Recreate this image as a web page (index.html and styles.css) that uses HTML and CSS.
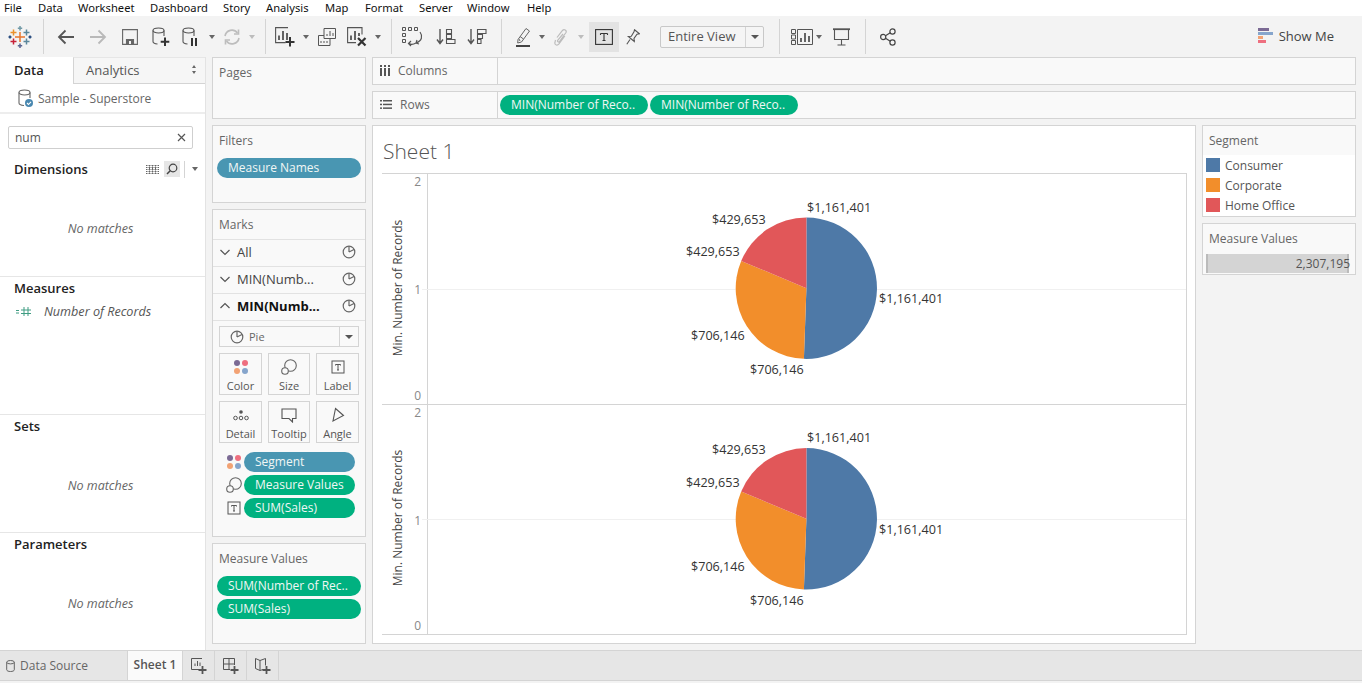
FILE: index.html
```html
<!DOCTYPE html>
<html lang="en">
<head>
<meta charset="utf-8">
<title>Tableau - Sheet 1</title>
<link rel="stylesheet" href="styles.css">
</head>
<body>
<svg class="defs" aria-hidden="true">
  <symbol id="pie" viewBox="0 0 14 14"><circle cx="7" cy="7" r="5.800" fill="none" stroke="#666" stroke-width="1.200"/><path d="M7 7V1.200M7 7l5-2.500" fill="none" stroke="#666" stroke-width="1.200"/></symbol>
  <symbol id="chev-d" viewBox="0 0 12 12"><path d="M1.500 4l4.500 4.500L10.500 4" fill="none" stroke="#555" stroke-width="1.200"/></symbol>
  <symbol id="chev-u" viewBox="0 0 12 12"><path d="M1.500 8L6 3.500 10.500 8" fill="none" stroke="#555" stroke-width="1.200"/></symbol>
  <symbol id="dots" viewBox="0 0 16 16"><circle cx="4" cy="4" r="3" fill="#7b6a94"/><circle cx="12" cy="4" r="3" fill="#ee6f7f"/><circle cx="4" cy="12" r="3" fill="#f2a274"/><circle cx="12" cy="12" r="3" fill="#86a5cc"/></symbol>
  <symbol id="size" viewBox="0 0 16 16"><circle cx="9.500" cy="6.500" r="5.800" fill="none" stroke="#666" stroke-width="1.100"/><circle cx="4" cy="12" r="3.300" fill="#fafafa" stroke="#666" stroke-width="1.100"/></symbol>
  <symbol id="tbox" viewBox="0 0 14 14"><rect x="1" y="1" width="12" height="12" fill="none" stroke="#555"/><path d="M4.500 4.500h5M7 4.500v5.500M6 10h2M4.500 4.500v1M9.500 4.500v1" fill="none" stroke="#555"/></symbol>
</svg>

<div class="app">
  <nav class="menu">
    <span class="m m-file">File</span><span class="m m-data">Data</span><span class="m m-ws">Worksheet</span><span class="m m-db">Dashboard</span><span class="m m-st">Story</span><span class="m m-an">Analysis</span><span class="m m-map">Map</span><span class="m m-fm">Format</span><span class="m m-sv">Server</span><span class="m m-wn">Window</span><span class="m">Help</span>
  </nav>

  <header class="toolbar">
    <span class="tb w32"><svg width="24" height="24" viewBox="0 0 24 24" fill="none" stroke-width="1.500"><path d="M12 7v10M7 12h10" stroke="#e8762d"/><path d="M5.500 13.500v6M2.500 16.500h6" stroke="#c72037"/><path d="M18.500 13.500v6M15.500 16.500h6" stroke="#5b879b"/><path d="M5.500 4.500v6M2.500 7.500h6" stroke="#eb912b"/><path d="M18.500 4.500v6M15.500 7.500h6" stroke="#59879b"/><path d="M12 1v4.500M9.800 3.200h4.400" stroke="#7099a6"/><path d="M12 18.500V23M9.800 20.700h4.400" stroke="#5b6591"/><path d="M2 10.500v3M.5 12h3M22 10.500v3M20.500 12h3" stroke="#1f447a"/></svg></span>
    <span class="sep ml7"></span>
    <span class="tb w32 ml6"><svg width="18" height="16" viewBox="0 0 18 16" fill="none" stroke="#555" stroke-width="1.800"><path d="M17 8H2M8.500 1.500L2 8l6.500 6.500"/></svg></span>
    <span class="tb w32"><svg width="18" height="16" viewBox="0 0 18 16" fill="none" stroke="#b9b9b9" stroke-width="1.800"><path d="M1 8h15M9.500 1.500L16 8l-6.500 6.500"/></svg></span>
    <span class="tb w32"><svg width="16" height="16" viewBox="0 0 16 16" fill="none" stroke="#666" stroke-width="1.100"><path d="M.6.6h14.800v14.800H.6z"/><path d="M4.500 15v-4.500h7V15z" fill="#666"/><path d="M7 12h2v3H7z" fill="#f3f3f3" stroke="none"/></svg></span>
    <span class="tb w30"><svg width="18" height="20" viewBox="0 0 18 20" fill="none" stroke="#555" stroke-width="1.100"><ellipse cx="6.500" cy="3.500" rx="5.500" ry="2.500"/><path d="M1 3.500v11c0 1.500 2 2.300 4.500 2.500M12 3.500V9"/><path d="M13 10.500v8.500M8.700 14.800h8.600" stroke="#333" stroke-width="2"/></svg></span>
    <span class="tb w30"><svg width="18" height="20" viewBox="0 0 18 20" fill="none" stroke="#555" stroke-width="1.100"><ellipse cx="6.500" cy="3.500" rx="5.500" ry="2.500"/><path d="M1 3.500v11c0 1.500 2 2.300 4.500 2.500M12 3.500V9"/><path d="M10 11v8M14 11v8" stroke="#333" stroke-width="2"/></svg></span>
    <span class="tb w12"><i class="caret"></i></span>
    <span class="tb w28"><svg width="18" height="18" viewBox="0 0 18 18" fill="none" stroke="#bdbdbd" stroke-width="1.600"><path d="M2 8a7 7 0 0 1 12.500-3M16 10a7 7 0 0 1-12.500 3"/><path d="M15.500 1.500V6h-4.500M2.500 16.500V12H7"/></svg></span>
    <span class="tb w12"><i class="caret soft"></i></span>
    <span class="sep ml7"></span>
    <span class="tb w30 ml4"><svg width="20" height="20" viewBox="0 0 20 20" fill="none" stroke="#555" stroke-width="1.100"><path d="M13 .6H.6v15h10"/><path d="M4 13V8.500M8 13V4M12 13V6" stroke-width="1.800"/><path d="M15 10v9.500M10.500 15h9" stroke="#333" stroke-width="2"/></svg></span>
    <span class="tb w12"><i class="caret"></i></span>
    <span class="tb w30"><svg width="18" height="18" viewBox="0 0 18 18" fill="none" stroke="#555" stroke-width="1"><path d="M6 .5h11.500v10H6z"/><path d="M9 8V6M12 8V3M15 8V5"/><path d="M.5 7.500H6M.5 7.500v10H12v-7"/><path d="M3 15v-2M6 15v-2M9 15v-2"/></svg></span>
    <span class="tb w30"><svg width="20" height="20" viewBox="0 0 20 20" fill="none" stroke="#555" stroke-width="1.100"><path d="M15 7.500V.6H.6v15H9"/><path d="M4 13V8.500M8 13V4M12 9V6" stroke-width="1.800"/><path d="M11 11l7.500 7.500M18.500 11L11 18.500" stroke="#333" stroke-width="2.200"/></svg></span>
    <span class="tb w12"><i class="caret"></i></span>
    <span class="sep ml7"></span>
    <span class="tb w32 ml5"><svg width="22" height="20" viewBox="0 0 22 20" fill="none" stroke="#555" stroke-width="1"><path d="M.5.500h3v3h-3zM6.500.500h3v3h-3zM12.500.500h3v3h-3zM.5 6.500h3v3h-3zM.5 12.500h3v3h-3z"/><path d="M18 5c3 4 2 9-4 11M7 16.500c1.500 1 4 1.200 7-.5M15 13l-1 3 3 1M9 19l-2.500-2.500L9 14" stroke-width="1.200"/></svg></span>
    <span class="tb w34"><svg width="20" height="18" viewBox="0 0 20 18" fill="none" stroke="#555" stroke-width="1.100"><path d="M4 1v14M1 11.500L4 15.500l3-4" stroke-width="1.400"/><path d="M10.500 1.500h5v4h-5zM10.500 6.500h5v4h-5zM10.500 11.500h8.500v4h-8.500z"/></svg></span>
    <span class="tb w28"><svg width="20" height="18" viewBox="0 0 20 18" fill="none" stroke="#555" stroke-width="1.100"><path d="M4 1v14M1 11.500L4 15.500l3-4" stroke-width="1.400"/><path d="M10.500 1.500h8.500v4h-8.500zM10.500 6.500h5v4h-5zM10.500 11.500h3.500v4h-3.500z"/></svg></span>
    <span class="sep ml10"></span>
    <span class="tb w26 ml9"><svg width="16" height="20" viewBox="0 0 16 20" fill="none" stroke="#666" stroke-width="1"><path d="M2 12.500L10 1.500l3.500 2.500-8 11-3.800 1z"/><path d="M4 9.500l3.500 2.500M3 12l1 2"/><path d="M0 19h14" stroke="#444" stroke-width="2"/></svg></span>
    <span class="tb w10"><i class="caret"></i></span>
    <span class="tb w28"><svg width="14" height="18" viewBox="0 0 14 18" fill="none" stroke="#bcbcbc" stroke-width="1.200"><path d="M3 9.500L8.500 2.500c1.500-1.800 4.500-.3 3.500 2l-6.500 9c-1 1.200-2.500 0-1.800-1.200L9 6M1.500 12L.8 15c0 2 2.500 2.800 4 1.200l6-8.200"/></svg></span>
    <span class="tb w12"><i class="caret soft"></i></span>
    <span class="tb w30 ml2 active"><svg width="18" height="16" viewBox="0 0 18 16" fill="none" stroke="#333" stroke-width="1.100"><rect x=".6" y=".6" width="16.800" height="14.800"/><path d="M5.500 4.500h7M9 4.500v7M7.500 11.500h3M5.500 4.500v1.500M12.500 4.500v1.500"/></svg></span>
    <span class="tb w28"><svg width="14" height="16" viewBox="0 0 14 16" fill="none" stroke="#555" stroke-width="1.100"><path d="M8.500.8l5 4-2.500.5L8 9.500l.3 3-3-2.500-3-2.500 3-.3L8 2.800zM4 10.500L.8 15.200"/></svg></span>
    <span class="fit ml13"><span class="fit-label">Entire View</span><span class="fit-arrow"><i class="caret dark"></i></span></span>
    <span class="sep ml15"></span>
    <span class="tb w26 ml9"><svg width="22" height="16" viewBox="0 0 22 16" fill="none" stroke="#555" stroke-width="1"><path d="M.5.500h4v4h-4zM.5 6h4v4h-4zM.5 11.500h4v4h-4zM6.500.500h15v15h-15z"/><path d="M10 13V9M14 13V4M18 13V7" stroke-width="1.800"/></svg></span>
    <span class="tb w8"><i class="caret"></i></span>
    <span class="tb w38"><svg width="18" height="18" viewBox="0 0 18 18" fill="none" stroke="#555" stroke-width="1.100"><path d="M0 1.200h17" stroke-width="1.800"/><path d="M1.500 1.500v10h14v-10M8.500 11.500V17M4.500 17h8"/></svg></span>
    <span class="sep ml4"></span>
    <span class="tb w32 ml6"><svg width="16" height="18" viewBox="0 0 16 18" fill="none" stroke="#444" stroke-width="1.200"><circle cx="3.200" cy="9" r="2.600"/><circle cx="12.500" cy="3.500" r="2.600"/><circle cx="12.500" cy="14.500" r="2.600"/><path d="M5.500 7.700l4.800-2.900M5.500 10.300l4.800 2.900"/></svg></span>
    <span class="showme">
      <svg width="15" height="16" viewBox="0 0 15 16"><rect width="11" height="3" fill="#7b6a94"/><rect y="4" width="15" height="3" fill="#86a5cc"/><rect y="8" width="5" height="3" fill="#f2a274"/><rect y="12" width="8" height="3" fill="#ee6f7f"/></svg>
      <span>Show Me</span>
    </span>
  </header>

  <main class="main">
    <aside class="sidebar">
      <div class="tabs">
        <span class="tab-data">Data</span>
        <span class="tab-an">Analytics<i class="updown"></i></span>
      </div>
      <div class="source">
        <svg width="16" height="19" viewBox="0 0 16 19" fill="none" stroke="#666" stroke-width="1.100"><ellipse cx="6.500" cy="3.500" rx="5.500" ry="2.500"/><path d="M1 3.500v10.500c0 1.500 2 2.300 5 2.500M12 3.500V9"/><circle cx="11" cy="14" r="4" fill="#4a88b0" stroke="none"/><path d="M9 14l1.500 1.500L13 12.800" stroke="#fff"/></svg>
        <span>Sample - Superstore</span>
      </div>
      <div class="search"><div class="search-box"><span>num</span><svg width="9" height="9" viewBox="0 0 9 9" fill="none" stroke="#555" stroke-width="1.200"><path d="M1 1l7 7M8 1L1 8"/></svg></div></div>
      <section class="sec sec-dim">
        <div class="sec-head">
          <h3>Dimensions</h3>
          <span class="dim-tools">
            <svg width="13" height="9" viewBox="0 0 13 9" fill="none" stroke="#666"><path d="M0 .5h13M0 2.500h13M0 4.500h13M0 6.500h13M0 8.500h13M3.500 0v9M6.500 0v9M9.500 0v9" stroke-dasharray="1 .5"/></svg>
            <span class="find"><svg width="12" height="12" viewBox="0 0 12 12" fill="none" stroke="#444" stroke-width="1.200"><circle cx="7" cy="5" r="3.800"/><path d="M4.200 7.800L1 11" stroke-width="1.500"/></svg></span>
            <i class="tool-sep"></i>
            <i class="caret"></i>
          </span>
        </div>
        <p class="none none-dim">No matches</p>
      </section>
      <section class="sec sec-mea">
        <h3>Measures</h3>
        <div class="field"><svg width="15" height="9" viewBox="0 0 15 9" fill="none" stroke="#3f9c82"><path d="M0 3.500h3M0 6h3M5 3h10M5 6.500h10M8 0v9M12 0v9"/></svg><em>Number of Records</em></div>
      </section>
      <section class="sec sec-set">
        <h3>Sets</h3>
        <p class="none none-set">No matches</p>
      </section>
      <section class="sec sec-par">
        <h3>Parameters</h3>
        <p class="none none-par">No matches</p>
      </section>
    </aside>

    <div class="cards">
      <section class="card c-pages"><h4>Pages</h4></section>
      <section class="card c-filters"><h4>Filters</h4><div class="pill blue">Measure Names</div></section>
      <section class="card c-marks">
        <h4>Marks</h4>
        <div class="mrow"><svg class="chev"><use href="#chev-d"/></svg><span>All</span><svg class="pieic"><use href="#pie"/></svg></div>
        <div class="mrow"><svg class="chev"><use href="#chev-d"/></svg><span>MIN(Numb...</span><svg class="pieic"><use href="#pie"/></svg></div>
        <div class="mrow strong"><svg class="chev"><use href="#chev-u"/></svg><span>MIN(Numb...</span><svg class="pieic"><use href="#pie"/></svg></div>
        <div class="mbody">
          <div class="marktype"><svg class="pieic2"><use href="#pie"/></svg><span>Pie</span><span class="mt-arrow"><i class="caret dark"></i></span></div>
          <div class="mgrid">
            <div class="mbtn"><svg class="ic16"><use href="#dots"/></svg><span>Color</span></div>
            <div class="mbtn"><svg class="ic16"><use href="#size"/></svg><span>Size</span></div>
            <div class="mbtn"><svg class="ic14"><use href="#tbox"/></svg><span>Label</span></div>
            <div class="mbtn"><svg class="ic16" viewBox="0 0 16 16" fill="none" stroke="#555"><circle cx="8" cy="5" r="1.800" fill="#555" stroke="none"/><circle cx="2.500" cy="11" r="1.800"/><circle cx="8" cy="11" r="1.800"/><circle cx="13.500" cy="11" r="1.800"/></svg><span>Detail</span></div>
            <div class="mbtn"><svg class="ic16" viewBox="0 0 16 16" fill="none" stroke="#555" stroke-width="1.100"><path d="M1 2h14v9.500h-3.500v3.500l-3.500-3.500H1z"/></svg><span>Tooltip</span></div>
            <div class="mbtn"><svg class="ic16" viewBox="0 0 16 16" fill="none" stroke="#555" stroke-width="1.100"><path d="M5.500 1.500L13.500 8.500 3 14z"/></svg><span>Angle</span></div>
          </div>
          <div class="enc"><svg class="ic16"><use href="#dots"/></svg><div class="pill blue">Segment</div></div>
          <div class="enc"><svg class="ic16"><use href="#size"/></svg><div class="pill green">Measure Values</div></div>
          <div class="enc"><svg class="ic14 tpad"><use href="#tbox"/></svg><div class="pill green">SUM(Sales)</div></div>
        </div>
      </section>
      <section class="card c-mv">
        <h4>Measure Values</h4>
        <div class="pill green">SUM(Number of Rec..</div>
        <div class="pill green">SUM(Sales)</div>
      </section>
    </div>

    <div class="work">
      <section class="shelf"><div class="shelf-label"><svg width="10" height="11" viewBox="0 0 10 11" fill="#555"><rect y="3" width="2" height="8"/><rect x="4" y="3" width="2" height="8"/><rect x="8" y="3" width="2" height="8"/><rect y="0" width="2" height="2"/><rect x="4" y="0" width="2" height="2"/><rect x="8" y="0" width="2" height="2"/></svg><span>Columns</span></div><div class="shelf-body"></div></section>
      <section class="shelf"><div class="shelf-label"><svg width="12" height="9" viewBox="0 0 12 9" fill="#555"><rect width="2" height="1.500"/><rect x="3" width="9" height="1.500"/><rect y="3.700" width="2" height="1.500"/><rect x="3" y="3.700" width="9" height="1.500"/><rect y="7.400" width="2" height="1.500"/><rect x="3" y="7.400" width="9" height="1.500"/></svg><span>Rows</span></div><div class="shelf-body"><div class="pill green rowpill">MIN(Number of Reco..</div><div class="pill green rowpill">MIN(Number of Reco..</div></div></section>

      <div class="stage">
        <section class="view">
          <h2>Sheet 1</h2>
          <div class="chart">
            <svg class="pane pane1" viewBox="382 174 804 230">
              <path class="axis" d="M427.500 174v230"/>
              <path class="grid" d="M422 289.500h764"/>
              <text class="tick" x="421" y="186">2</text><text class="tick" x="421" y="294">1</text><text class="tick" x="421" y="400">0</text>
              <text class="atitle" transform="translate(402 288) rotate(-90)">Min. Number of Records</text>
              <g transform="translate(806.400 288.200)">
                <path fill="#4e79a7" d="M0-70.700A70.700 70.700 0 1 1-2.500 70.660L0 0z"/>
                <path fill="#f28e2b" d="M-2.500 70.660A70.700 70.700 0 0 1-65.200-27.300L0 0z"/>
                <path fill="#e15759" d="M-65.200-27.300A70.700 70.700 0 0 1 0-70.700L0 0z"/>
              </g>
              <text class="lab" x="807" y="212">$1,161,401</text><text class="lab" x="712" y="224">$429,653</text><text class="lab" x="686" y="256">$429,653</text><text class="lab" x="879" y="303">$1,161,401</text><text class="lab" x="691" y="340">$706,146</text><text class="lab" x="750" y="374">$706,146</text>
            </svg>
            <svg class="pane pane2" viewBox="382 405 804 229">
              <path class="axis" d="M427.500 405v229"/>
              <path class="grid" d="M422 519.500h764"/>
              <text class="tick" x="421" y="417">2</text><text class="tick" x="421" y="525">1</text><text class="tick" x="421" y="630">0</text>
              <text class="atitle" transform="translate(402 518) rotate(-90)">Min. Number of Records</text>
              <g transform="translate(806.400 518.800)">
                <path fill="#4e79a7" d="M0-70.700A70.700 70.700 0 1 1-2.500 70.660L0 0z"/>
                <path fill="#f28e2b" d="M-2.500 70.660A70.700 70.700 0 0 1-65.200-27.300L0 0z"/>
                <path fill="#e15759" d="M-65.200-27.300A70.700 70.700 0 0 1 0-70.700L0 0z"/>
              </g>
              <text class="lab" x="807" y="442">$1,161,401</text><text class="lab" x="712" y="454">$429,653</text><text class="lab" x="686" y="487">$429,653</text><text class="lab" x="879" y="534">$1,161,401</text><text class="lab" x="691" y="571">$706,146</text><text class="lab" x="750" y="605">$706,146</text>
            </svg>
          </div>
        </section>
        <aside class="legends">
          <section class="legend l-seg">
            <h4>Segment</h4>
            <ul>
              <li><i class="sw s-blue"></i>Consumer</li>
              <li><i class="sw s-orange"></i>Corporate</li>
              <li><i class="sw s-red"></i>Home Office</li>
            </ul>
          </section>
          <section class="legend l-mv">
            <h4>Measure Values</h4>
            <div class="range"><span>2,307,195</span></div>
          </section>
        </aside>
      </div>
    </div>
  </main>

  <footer class="tabbar">
    <span class="t-ds"><svg width="9" height="12" viewBox="0 0 9 12" fill="none" stroke="#666"><ellipse cx="4.500" cy="2.200" rx="3.800" ry="1.700"/><path d="M.7 2.200v7.600c0 1 1.700 1.700 3.800 1.700s3.800-.7 3.800-1.700V2.200"/></svg>Data Source</span>
    <span class="t-sheet">Sheet 1</span>
    <span class="t-new"><svg width="16" height="16" viewBox="0 0 16 16" fill="none" stroke="#555"><path d="M11 .5H.5v11H8"/><path d="M4 8V5.500M6.500 8V3M9 8V4.500"/><path d="M11.500 8v8M7.500 12h8" stroke-width="1.800"/></svg></span>
    <span class="t-new"><svg width="16" height="16" viewBox="0 0 16 16" fill="none" stroke="#555"><path d="M11.500 7V.5H.5v11H7M.5 6h11M6 .5v11"/><path d="M11.500 8v8M7.500 12h8" stroke-width="1.800"/></svg></span>
    <span class="t-new"><svg width="16" height="16" viewBox="0 0 16 16" fill="none" stroke="#555"><path d="M.5.500L5 2.500 10.500.5V7.500M.5.500V10.500L5 12.500 8 11.500M5 2.500V12.500"/><path d="M11.500 8v8M7.500 12h8" stroke-width="1.800"/></svg></span>
  </footer>
  <div class="statusbar"></div>
</div>
</body>
</html>
```
FILE: styles.css
```css
* { box-sizing: border-box; }
html, body { margin: 0; padding: 0; height: 100%; overflow: hidden; }
body { font-family: "Open Sans", "Noto Sans", sans-serif; font-size: 12px; color: #555; background: #f3f3f3; }
h2, h3, h4, p, ul { margin: 0; padding: 0; font-weight: normal; }
.defs { width: 0; height: 0; position: absolute; }
.app { display: flex; flex-direction: column; height: 683px; width: 1362px; }

/* menu */
.menu { height: 16px; background: #fff; display: flex; align-items: center; padding-left: 4px; font-family: "Noto Sans", sans-serif; font-size: 11.200px; color: #111; line-height: 14px; }
.m { display: block; }
.m-file { width: 34px; } .m-data { width: 40px; } .m-ws { width: 72px; } .m-db { width: 73px; } .m-st { width: 43px; }
.m-an { width: 59px; } .m-map { width: 40px; } .m-fm { width: 54px; } .m-sv { width: 48px; } .m-wn { width: 60px; }

/* toolbar */
.toolbar { height: 41px; background: #f3f3f3; display: flex; align-items: center; flex: none; padding-left: 4px; }
.tb { display: flex; align-items: center; justify-content: center; height: 30px; flex: none; }
.w8 { width: 8px; } .w10 { width: 10px; } .w12 { width: 12px; } .w26 { width: 26px; } .w28 { width: 28px; } .w30 { width: 30px; } .w32 { width: 32px; } .w34 { width: 34px; } .w38 { width: 38px; }
.ml2 { margin-left: 2px; } .ml4 { margin-left: 4px; } .ml5 { margin-left: 5px; } .ml6 { margin-left: 6px; } .ml7 { margin-left: 7px; } .ml9 { margin-left: 9px; } .ml10 { margin-left: 10px; } .ml13 { margin-left: 13px; } .ml15 { margin-left: 15px; }
.sep { width: 1px; height: 35px; background: #d4d4d4; flex: none; }
.active { background: #e3e3e3; }
.caret { display: inline-block; width: 0; height: 0; border-left: 3.500px solid transparent; border-right: 3.500px solid transparent; border-top: 4px solid #666; }
.caret.soft { border-top-color: #bdbdbd; }
.caret.dark { border-top-color: #555; border-left-width: 4px; border-right-width: 4px; border-top-width: 4px; }
.fit { width: 104px; height: 22px; border: 1px solid #c8c8c8; border-radius: 2px; display: flex; flex: none; background: #f5f5f5; }
.fit-label { width: 85px; padding-left: 7px; font-size: 13px; line-height: 19px; color: #555; border-right: 1px solid #d4d4d4; }
.fit-arrow { flex: 1; display: flex; align-items: center; justify-content: center; }
.showme { margin-left: auto; padding: 0 28px 2px 0; display: flex; align-items: center; gap: 6px; font-size: 13px; color: #444; }

/* main */
.main { flex: 1; display: flex; min-height: 0; }
.sidebar { width: 206px; background: #fff; border-right: 1px solid #e3e3e3; display: flex; flex-direction: column; flex: none; }
.tabs { display: flex; height: 27px; flex: none; font-size: 13px; }
.tab-data { width: 73px; padding-left: 14px; line-height: 26px; font-weight: 600; color: #222; }
.tab-an { flex: 1; padding: 0 8px 2px 12px; color: #555; background: #f6f6f6; border-left: 1px solid #d4d4d4; border-bottom: 1px solid #d4d4d4; border-top: 1px solid #e6e6e6; display: flex; justify-content: space-between; align-items: center; }
.updown { width: 5px; height: 9px; display: block; position: relative; }
.updown::before { content: ""; position: absolute; left: 0; top: 0; border-left: 2.500px solid transparent; border-right: 2.500px solid transparent; border-bottom: 3.500px solid #666; }
.updown::after { content: ""; position: absolute; left: 0; bottom: 0; border-left: 2.500px solid transparent; border-right: 2.500px solid transparent; border-top: 3.500px solid #666; }
.source { height: 30px; flex: none; display: flex; align-items: center; gap: 4px; padding-left: 18px; border-bottom: 2px solid #ededed; color: #666; }
.search { padding: 12px 12px 0 8px; flex: none; }
.search-box { height: 23px; border: 1px solid #cfcfcf; border-radius: 2px; display: flex; align-items: center; justify-content: space-between; padding: 0 6px 0 6px; color: #555; }
.sec { flex: none; padding: 0 0 0 14px; }
.sec h3 { font-size: 13px; font-weight: 600; color: #222; line-height: 18px; }
.sec-dim { height: 128px; padding-top: 11px; border-bottom: 1px solid #e6e6e6; }
.sec-head { display: flex; justify-content: space-between; align-items: center; padding-right: 7px; }
.dim-tools { display: flex; align-items: center; }
.find { width: 16px; height: 16px; background: #e6e6e6; display: flex; align-items: center; justify-content: center; margin-left: 5px; }
.tool-sep { width: 1px; height: 17px; background: #d4d4d4; margin: 0 7px 0 4px; }
.sec-mea { height: 138px; padding-top: 2px; border-bottom: 1px solid #e6e6e6; }
.sec-set { height: 118px; padding-top: 2px; border-bottom: 1px solid #e6e6e6; }
.sec-par { padding-top: 2px; }
.none { text-align: center; font-style: italic; color: #666; font-size: 12.500px; padding-right: 18px; }
.none-dim { margin-top: 42px; }
.none-set { margin-top: 42px; }
.none-par { margin-top: 42px; }
.field { display: flex; align-items: center; gap: 13px; margin: 6px 0 0 2px; }
.field em { color: #555; font-size: 12.600px; }

/* cards */
.cards { width: 154px; margin-left: 6px; display: flex; flex-direction: column; gap: 6px; flex: none; height: 587px; }
.card { background: #f9f9f9; border: 1px solid #d4d4d4; flex: none; }
.card h4 { font-size: 12px; color: #666; padding: 7px 0 0 6px; line-height: 16px; }
.c-pages { height: 62px; }
.c-filters { height: 78px; }
.c-filters .pill { margin: 9px 4px 0; }
.c-marks { height: 328px; }
.c-marks h4 { height: 29px; }
.c-mv { height: 101px; }
.c-mv h4 { height: 32px; padding-top: 7px; }
.c-mv .pill { margin: 0 4px 3px; }
.pill { height: 20px; border-radius: 10px; padding-left: 11px; line-height: 19px; font-size: 12px; color: #f1f7f5; white-space: nowrap; overflow: hidden; }
.green { background: #00b180; }
.blue { background: #4996b2; }
.mrow { height: 27px; border-top: 1px solid #e2e2e2; display: flex; align-items: center; padding: 0 9px 2px 6px; color: #444; font-size: 13px; }
.mrow span { flex: 1; padding-left: 6px; }
.mrow.strong { color: #111; font-weight: 700; }
.chev { width: 12px; height: 12px; }
.pieic { width: 14px; height: 14px; }
.pieic2 { width: 14px; height: 14px; margin: 0 5px 0 10px; }
.mbody { border-top: 1px solid #e2e2e2; padding: 5px 6px 0; }
.marktype { height: 21px; border: 1px solid #d4d4d4; background: #f9f9f9; display: flex; align-items: center; color: #666; font-size: 11px; width: 140px; }
.marktype span:nth-child(2) { flex: 1; }
.mt-arrow { width: 19px; height: 19px; border-left: 1px solid #d4d4d4; display: flex; align-items: center; justify-content: center; }
.mgrid { display: grid; grid-template-columns: 43px 42px 43px; column-gap: 6px; row-gap: 6px; margin-top: 6px; }
.mbtn { height: 42px; border: 1px solid #d4d4d4; display: flex; flex-direction: column; align-items: center; justify-content: flex-end; gap: 2px; padding-bottom: 1px; font-size: 11px; color: #555; }
.ic16 { width: 16px; height: 16px; margin-bottom: 1px; }
.ic14 { width: 14px; height: 14px; margin-bottom: 2px; }
.enc { display: flex; align-items: center; gap: 2px; margin: 3px 0 0; padding-left: 7px; height: 20px; width: 136px; }
.mgrid + .enc { margin-top: 9px; }
.enc .pill { flex: 1; }
.enc svg { margin: 0; flex: none; }
.tpad { margin: 0 1px !important; }

/* work area */
.work { width: 984px; margin-left: 6px; display: flex; flex-direction: column; gap: 6px; flex: none; height: 587px; }
.shelf { height: 28px; background: #f9f9f9; border: 1px solid #d4d4d4; display: flex; flex: none; }
.shelf-label { width: 125px; border-right: 1px solid #d4d4d4; display: flex; align-items: center; gap: 8px; padding: 0 0 2px 7px; color: #666; }
.shelf-body { flex: 1; display: flex; gap: 2px; padding: 3px 0 0 2px; }
.rowpill { width: 148px; }
.stage { display: flex; flex: 1; gap: 6px; min-height: 0; }
.view { width: 824px; background: #fff; border: 1px solid #d4d4d4; flex: none; padding: 0 0 0 9px; }
.view h2 { font-size: 21px; font-weight: 300; color: #555; line-height: 51px; height: 47px; padding-left: 1px; }
.chart { border: 1px solid #d4d4d4; border-left: 0; width: 805px; height: 462px; }
.pane { display: block; width: 804px; overflow: visible; }
.pane1 { height: 231px; border-bottom: 1px solid #d4d4d4; }
.pane2 { height: 229px; }
.axis { stroke: #d4d4d4; fill: none; }
.grid { stroke: #f0f0f0; fill: none; }
.tick { font-size: 12px; fill: #888; text-anchor: end; }
.atitle { font-size: 12px; fill: #444; text-anchor: middle; }
.lab { font-size: 12.600px; fill: #333; }
.legends { width: 154px; display: flex; flex-direction: column; gap: 6px; flex: none; }
.legend { border: 1px solid #d4d4d4; background: #f9f9f9; flex: none; }
.legend h4 { font-size: 12px; color: #666; padding-left: 6px; }
.l-seg { height: 92px; }
.l-seg h4 { height: 29px; line-height: 29px; }
.l-seg ul { list-style: none; background: #fff; height: 61px; padding-left: 3px; }
.l-seg li { display: flex; align-items: center; gap: 5px; height: 20px; color: #555; }
.sw { width: 14px; height: 14px; display: block; }
.s-blue { background: #4e79a7; } .s-orange { background: #f28e2b; } .s-red { background: #e15759; }
.l-mv { height: 52px; background: #f9f9f9; }
.l-mv h4 { height: 30px; line-height: 29px; }
.range { height: 19px; margin-left: 3px; width: 143px; background: #d4d4d4; border-left: 2px solid #bbb; border-right: 2px solid #bbb; display: flex; justify-content: flex-end; line-height: 19px; color: #555; white-space: nowrap; }
.range span { margin-right: -3px; }

/* bottom tabs */
.tabbar { height: 31px; background: #e6e6e6; border-top: 1px solid #d4d4d4; border-bottom: 1px solid #d4d4d4; display: flex; flex: none; color: #666; }
.t-ds { width: 127px; display: flex; align-items: center; gap: 5px; padding-left: 6px; }
.t-sheet { width: 56px; background: #fafafa; border-left: 1px solid #d4d4d4; border-right: 1px solid #d4d4d4; text-align: center; line-height: 27px; font-weight: 600; color: #555; }
.t-new { width: 32px; border-right: 1px solid #d4d4d4; display: flex; align-items: center; justify-content: center; }
.statusbar { height: 2px; background: #f3f3f3; flex: none; }
```
